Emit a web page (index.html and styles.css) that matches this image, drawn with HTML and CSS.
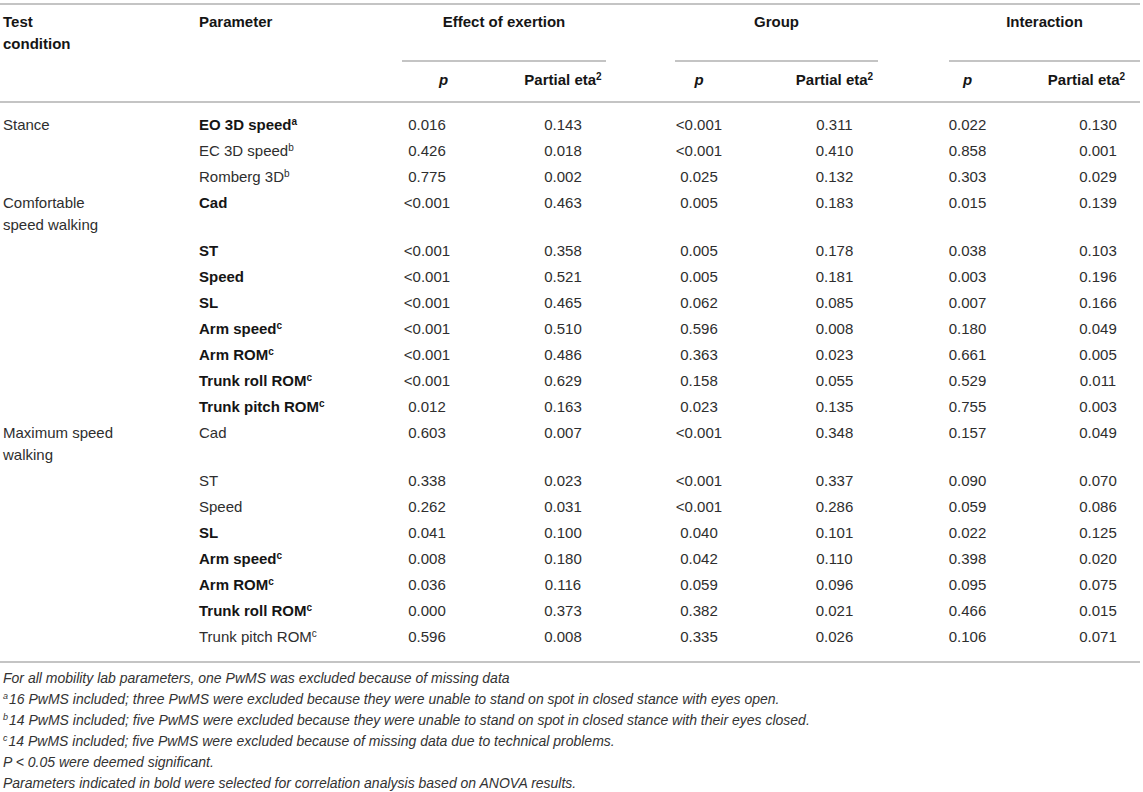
FILE: index.html
```html
<!DOCTYPE html>
<html lang="en">
<head>
<meta charset="utf-8">
<title>ANOVA results</title>
<link rel="stylesheet" href="styles.css">
</head>
<body>
<div class="wrap">
<table class="data">
<colgroup>
<col class="c1"><col class="c2"><col class="c3"><col class="c4"><col class="c5"><col class="c6"><col class="c7"><col class="c8">
</colgroup>
<thead>
<tr class="h1">
<th rowspan="2" class="lab">Test<br>condition</th>
<th rowspan="2" class="lab">Parameter</th>
<th colspan="2" class="grp"><div class="grp-in g-eff">Effect of exertion</div></th>
<th colspan="2" class="grp"><div class="grp-in g-grp">Group</div></th>
<th colspan="2" class="grp"><div class="grp-in g-int">Interaction</div></th>
</tr>
<tr class="h2">
<th class="n n3"><i>p</i></th>
<th class="n">Partial eta<sup>2</sup></th>
<th class="n"><i>p</i></th>
<th class="n">Partial eta<sup>2</sup></th>
<th class="n"><i>p</i></th>
<th class="n n8">Partial eta<sup>2</sup></th>
</tr>
</thead>
<tbody>
<tr><td>Stance</td><td class="b">EO 3D speed<sup>a</sup></td><td class="n n3">0.016</td><td class="n">0.143</td><td class="n">&lt;0.001</td><td class="n">0.311</td><td class="n">0.022</td><td class="n n8">0.130</td></tr>
<tr><td></td><td>EC 3D speed<sup>b</sup></td><td class="n n3">0.426</td><td class="n">0.018</td><td class="n">&lt;0.001</td><td class="n">0.410</td><td class="n">0.858</td><td class="n n8">0.001</td></tr>
<tr><td></td><td>Romberg 3D<sup>b</sup></td><td class="n n3">0.775</td><td class="n">0.002</td><td class="n">0.025</td><td class="n">0.132</td><td class="n">0.303</td><td class="n n8">0.029</td></tr>
<tr><td>Comfortable<br>speed walking</td><td class="b">Cad</td><td class="n n3">&lt;0.001</td><td class="n">0.463</td><td class="n">0.005</td><td class="n">0.183</td><td class="n">0.015</td><td class="n n8">0.139</td></tr>
<tr><td></td><td class="b">ST</td><td class="n n3">&lt;0.001</td><td class="n">0.358</td><td class="n">0.005</td><td class="n">0.178</td><td class="n">0.038</td><td class="n n8">0.103</td></tr>
<tr><td></td><td class="b">Speed</td><td class="n n3">&lt;0.001</td><td class="n">0.521</td><td class="n">0.005</td><td class="n">0.181</td><td class="n">0.003</td><td class="n n8">0.196</td></tr>
<tr><td></td><td class="b">SL</td><td class="n n3">&lt;0.001</td><td class="n">0.465</td><td class="n">0.062</td><td class="n">0.085</td><td class="n">0.007</td><td class="n n8">0.166</td></tr>
<tr><td></td><td class="b">Arm speed<sup>c</sup></td><td class="n n3">&lt;0.001</td><td class="n">0.510</td><td class="n">0.596</td><td class="n">0.008</td><td class="n">0.180</td><td class="n n8">0.049</td></tr>
<tr><td></td><td class="b">Arm ROM<sup>c</sup></td><td class="n n3">&lt;0.001</td><td class="n">0.486</td><td class="n">0.363</td><td class="n">0.023</td><td class="n">0.661</td><td class="n n8">0.005</td></tr>
<tr><td></td><td class="b">Trunk roll ROM<sup>c</sup></td><td class="n n3">&lt;0.001</td><td class="n">0.629</td><td class="n">0.158</td><td class="n">0.055</td><td class="n">0.529</td><td class="n n8">0.011</td></tr>
<tr><td></td><td class="b">Trunk pitch ROM<sup>c</sup></td><td class="n n3">0.012</td><td class="n">0.163</td><td class="n">0.023</td><td class="n">0.135</td><td class="n">0.755</td><td class="n n8">0.003</td></tr>
<tr><td>Maximum speed<br>walking</td><td>Cad</td><td class="n n3">0.603</td><td class="n">0.007</td><td class="n">&lt;0.001</td><td class="n">0.348</td><td class="n">0.157</td><td class="n n8">0.049</td></tr>
<tr><td></td><td>ST</td><td class="n n3">0.338</td><td class="n">0.023</td><td class="n">&lt;0.001</td><td class="n">0.337</td><td class="n">0.090</td><td class="n n8">0.070</td></tr>
<tr><td></td><td>Speed</td><td class="n n3">0.262</td><td class="n">0.031</td><td class="n">&lt;0.001</td><td class="n">0.286</td><td class="n">0.059</td><td class="n n8">0.086</td></tr>
<tr><td></td><td class="b">SL</td><td class="n n3">0.041</td><td class="n">0.100</td><td class="n">0.040</td><td class="n">0.101</td><td class="n">0.022</td><td class="n n8">0.125</td></tr>
<tr><td></td><td class="b">Arm speed<sup>c</sup></td><td class="n n3">0.008</td><td class="n">0.180</td><td class="n">0.042</td><td class="n">0.110</td><td class="n">0.398</td><td class="n n8">0.020</td></tr>
<tr><td></td><td class="b">Arm ROM<sup>c</sup></td><td class="n n3">0.036</td><td class="n">0.116</td><td class="n">0.059</td><td class="n">0.096</td><td class="n">0.095</td><td class="n n8">0.075</td></tr>
<tr><td></td><td class="b">Trunk roll ROM<sup>c</sup></td><td class="n n3">0.000</td><td class="n">0.373</td><td class="n">0.382</td><td class="n">0.021</td><td class="n">0.466</td><td class="n n8">0.015</td></tr>
<tr><td></td><td>Trunk pitch ROM<sup>c</sup></td><td class="n n3">0.596</td><td class="n">0.008</td><td class="n">0.335</td><td class="n">0.026</td><td class="n">0.106</td><td class="n n8">0.071</td></tr>
</tbody>
</table>
<div class="notes">
<p>For all mobility lab parameters, one PwMS was excluded because of missing data</p>
<p><sup>a</sup>16 PwMS included; three PwMS were excluded because they were unable to stand on spot in closed stance with eyes open.</p>
<p><sup>b</sup>14 PwMS included; five PwMS were excluded because they were unable to stand on spot in closed stance with their eyes closed.</p>
<p><sup>c</sup>14 PwMS included; five PwMS were excluded because of missing data due to technical problems.</p>
<p>P &lt; 0.05 were deemed significant.</p>
<p>Parameters indicated in bold were selected for correlation analysis based on ANOVA results.</p>
</div>
</div>
</body>
</html>
```

FILE: styles.css
```css
html, body {
  margin: 0;
  padding: 0;
  background: #ffffff;
}
body {
  font-family: "Liberation Sans", Arial, Helvetica, sans-serif;
  color: #2e2e2e;
}
.wrap {
  width: 1140px;
  padding-top: 3px;
}
.data {
  width: 1140px;
  table-layout: fixed;
  border-collapse: separate;
  border-spacing: 0;
  border-top: 2px solid #c4c4c4;
  font-size: 15px;
  line-height: 22px;
}
.c1 { width: 196px; }
.c2 { width: 196px; }
.c3 { width: 103px; }
.c4 { width: 136px; }
.c5 { width: 136px; }
.c6 { width: 135px; }
.c7 { width: 131px; }
.c8 { width: 107px; }

th {
  font-weight: bold;
  color: #151515;
  text-align: left;
  vertical-align: top;
}
.lab {
  padding: 6px 3px 0;
  border-bottom: 2px solid #c4c4c4;
}
.h1 .grp {
  padding: 6px 0 0;
}
.grp-in {
  text-align: center;
  padding-bottom: 27px;
  border-bottom: 2px solid #c4c4c4;
}
.g-eff { margin: 0 25px 0 10px; }
.g-grp { margin: 0 24px 0 44px; }
.g-int { margin: 0 0 0 47px; }
.h2 th {
  padding: 7px 0 10px;
  border-bottom: 2px solid #c4c4c4;
}
th i {
  font-style: italic;
}
sup {
  font-size: 10px;
  line-height: 0;
  vertical-align: 5px;
}
td {
  padding: 2px 3px;
  vertical-align: top;
  white-space: nowrap;
}
td.b {
  font-weight: bold;
  color: #151515;
}
.n {
  text-align: center;
  padding-left: 0;
  padding-right: 0;
}
.n3 { padding-right: 33px; }
.n8 { padding-left: 23px; }
tbody tr:first-child td {
  padding-top: 11px;
}
tbody tr:last-child td {
  padding-bottom: 13px;
  border-bottom: 2px solid #c4c4c4;
}
.notes {
  padding-top: 5px;
  font-size: 14px;
  line-height: 21px;
  font-style: italic;
  color: #333333;
}
.notes p {
  margin: 0;
  padding-left: 3px;
}
.notes sup {
  font-size: 9px;
  vertical-align: 5px;
  margin-right: 1px;
}
```
